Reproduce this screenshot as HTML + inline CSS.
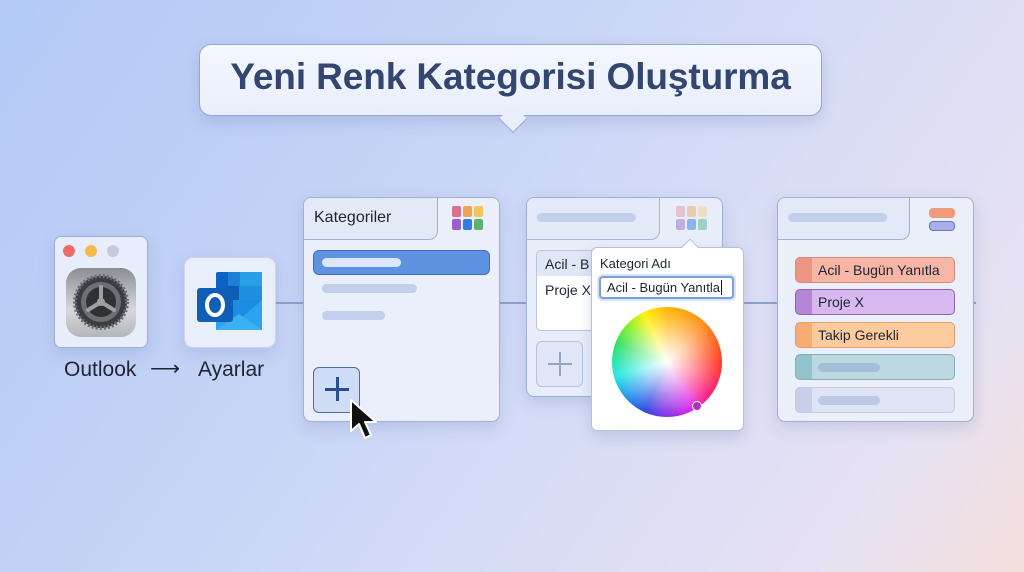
<!DOCTYPE html>
<html><head><meta charset="utf-8"><style>
*{box-sizing:border-box;margin:0;padding:0}
html,body{width:1024px;height:572px;overflow:hidden}
body{position:relative;font-family:"Liberation Sans",sans-serif;
background:linear-gradient(125deg,#b3c9f6 0%,#c5d3f6 35%,#d6dcf6 60%,#e6e1f2 85%,#f3e0dc 100%);}
.abs{position:absolute}
.panel{position:absolute;background:#eaeffb;border:1.5px solid #9fb0d6;border-radius:8px;box-shadow:0 6px 16px rgba(80,100,160,.18)}
.bar{position:absolute;height:9px;border-radius:5px;background:#c2d0ee}
.t{color:#1e2433}
</style></head><body>
<div class="abs" style="left:276px;top:302px;width:700px;height:1.5px;background:#8ea0cc"></div>

<div class="abs" style="left:199px;top:44px;width:623px;height:72px;background:linear-gradient(#f4f7fe,#e8eefc);border:1.5px solid #93a6d2;border-radius:12px;box-shadow:0 6px 16px rgba(80,100,160,.2)"></div>
<div class="abs" style="left:503px;top:109px;width:20px;height:20px;background:#e9eefc;border-right:1.5px solid #93a6d2;border-bottom:1.5px solid #93a6d2;transform:rotate(45deg)"></div>
<div class="abs" style="left:199px;top:56px;width:623px;text-align:center;font-size:37px;font-weight:bold;color:#34466f;letter-spacing:-0.1px">Yeni Renk Kategorisi Oluşturma</div>

<div class="panel" style="left:54px;top:236px;width:94px;height:112px;border-radius:7px;background:#e7edfb"></div>
<div class="abs" style="left:63px;top:245px;width:12px;height:12px;border-radius:50%;background:#ee6a66"></div>
<div class="abs" style="left:85px;top:245px;width:12px;height:12px;border-radius:50%;background:#f5b94c"></div>
<div class="abs" style="left:107px;top:245px;width:12px;height:12px;border-radius:50%;background:#c4ccdc"></div>
<div class="abs" style="left:66px;top:268px;width:70px;height:69px;border-radius:15px;background:linear-gradient(#8a8d92,#d7d8db 60%,#b4b6ba)"></div>
<svg class="abs" style="left:71px;top:272px" width="60" height="60" viewBox="0 0 60 60">
<circle cx="30" cy="30" r="26" fill="#3b3d42"/>
<circle cx="30" cy="30" r="26" fill="none" stroke="#6a6c70" stroke-width="4" stroke-dasharray="2 2"/>
<circle cx="30" cy="30" r="20" fill="#6d6f74"/>
<circle cx="30" cy="30" r="15" fill="#2f3135"/>
<g stroke="#9ea0a4" stroke-width="4" stroke-linecap="round"><line x1="30" y1="30" x2="30" y2="15"/><line x1="30" y1="30" x2="43" y2="38"/><line x1="30" y1="30" x2="17" y2="38"/></g>
<circle cx="30" cy="30" r="4" fill="#9ea0a4"/>
</svg>

<div class="panel" style="left:184px;top:257px;width:92px;height:91px;border-radius:9px;background:#e9eefb;border-color:#c9d4ef"></div>
<svg class="abs" style="left:195px;top:270px" width="70" height="64" viewBox="0 0 70 64">
<rect x="21" y="2" width="46" height="30" rx="2" fill="#0f62c4"/>
<rect x="44" y="2" width="23" height="14" fill="#27a0e8"/>
<rect x="33" y="2" width="12" height="14" fill="#1c80d6"/>
<rect x="33" y="16" width="12" height="14" fill="#0f5cb3"/>
<rect x="44" y="16" width="23" height="14" fill="#1f90e0"/>
<path d="M21 30 L67 30 L67 60 L21 60Z" fill="#1b8de0"/>
<path d="M21 38 L44 50 L67 30 L67 60 L21 60Z" fill="#2aa4ee"/>
<path d="M21 60 L44 44 L67 60Z" fill="#3cb1f2"/>
<rect x="2" y="18" width="36" height="34" rx="3" fill="#0f5fb6"/>
<ellipse cx="20" cy="35" rx="8" ry="10" fill="none" stroke="#fff" stroke-width="4"/>
</svg>

<div class="abs t" style="left:64px;top:358px;font-size:21px">Outlook</div>
<div class="abs t" style="left:150px;top:356px;font-size:21px">⟶</div>
<div class="abs t" style="left:198px;top:358px;font-size:21px">Ayarlar</div>

<div class="panel" style="left:303px;top:197px;width:197px;height:225px"></div>
<div class="abs" style="left:304px;top:198px;width:134px;height:42px;background:#e3e9f7;border-bottom:1.5px solid #9fb0d6;border-right:1.5px solid #9fb0d6;border-radius:7px 0 9px 0"></div>
<div class="abs t" style="left:314px;top:209px;font-size:16px">Kategoriler</div>
<svg class="abs" style="left:452px;top:206px" width="32" height="26"><g>
<rect x="0" y="0" width="9" height="11" rx="2" fill="#d9708d"/><rect x="11" y="0" width="9" height="11" rx="2" fill="#f0a250"/><rect x="22" y="0" width="9" height="11" rx="2" fill="#f4c35a"/>
<rect x="0" y="13" width="9" height="11" rx="2" fill="#9a5fcc"/><rect x="11" y="13" width="9" height="11" rx="2" fill="#2f7ddc"/><rect x="22" y="13" width="9" height="11" rx="2" fill="#5ab46e"/></g></svg>
<div class="abs" style="left:313px;top:250px;width:177px;height:25px;border-radius:6px;background:#5f93e2;border:1.5px solid #3c6fc0"></div>
<div class="bar" style="left:322px;top:258px;width:79px;background:#dbe6fb"></div>
<div class="bar" style="left:322px;top:284px;width:95px"></div>
<div class="bar" style="left:322px;top:311px;width:63px"></div>
<div class="abs" style="left:313px;top:367px;width:47px;height:46px;border-radius:6px;background:#cfdcf6;border:1.5px solid #4e6da6"></div>
<div class="abs" style="left:325px;top:388px;width:24px;height:3px;background:#284e8e"></div>
<div class="abs" style="left:336px;top:377px;width:3px;height:24px;background:#284e8e"></div>
<svg class="abs" style="left:348px;top:398px" width="34" height="44" viewBox="0 0 34 44"><path d="M3 2 L3 33 L11 26 L17 40 L23 37 L17 24 L28 24Z" fill="#111" stroke="#fff" stroke-width="2" stroke-linejoin="round"/></svg>

<div class="panel" style="left:526px;top:197px;width:197px;height:200px;background:#e8edf9"></div>
<div class="abs" style="left:527px;top:198px;width:133px;height:42px;background:#e3e9f7;border-bottom:1.5px solid #a8b7da;border-right:1.5px solid #a8b7da;border-radius:7px 0 9px 0"></div>
<div class="bar" style="left:537px;top:213px;width:99px"></div>
<svg class="abs" style="left:676px;top:206px" width="32" height="26" opacity=".5"><g>
<rect x="0" y="0" width="9" height="11" rx="2" fill="#e09aa8"/><rect x="11" y="0" width="9" height="11" rx="2" fill="#f0a870"/><rect x="22" y="0" width="9" height="11" rx="2" fill="#f4d090"/>
<rect x="0" y="13" width="9" height="11" rx="2" fill="#9a6fd0"/><rect x="11" y="13" width="9" height="11" rx="2" fill="#2f7ddc"/><rect x="22" y="13" width="9" height="11" rx="2" fill="#5ab48e"/></g></svg>
<div class="abs" style="left:536px;top:250px;width:70px;height:81px;background:#fff;border:1.5px solid #b8c4e0;border-radius:5px;overflow:hidden">
<div style="height:25px;background:#dfe6f5"></div></div>
<div class="abs t" style="left:545px;top:256px;font-size:14px">Acil - B</div>
<div class="abs t" style="left:545px;top:282px;font-size:14px">Proje X</div>
<div class="abs" style="left:536px;top:341px;width:47px;height:46px;border-radius:6px;background:#e1e7f6;border:1.5px solid #b6c2de"></div>
<div class="abs" style="left:548px;top:363px;width:24px;height:2px;background:#98a6c4"></div>
<div class="abs" style="left:559px;top:352px;width:2px;height:24px;background:#98a6c4"></div>

<div class="abs" style="left:591px;top:247px;width:153px;height:184px;background:#fff;border:1.5px solid #b3c0de;border-radius:6px;box-shadow:0 6px 14px rgba(80,100,160,.2)"></div>
<div class="abs" style="left:684px;top:241px;width:12px;height:12px;background:#fff;border-left:1.5px solid #b3c0de;border-top:1.5px solid #b3c0de;transform:rotate(45deg)"></div>
<div class="abs t" style="left:600px;top:256px;font-size:13px">Kategori Adı</div>
<div class="abs" style="left:599px;top:276px;width:135px;height:23px;border:2px solid #7aa0dc;border-radius:4px;background:#fff;box-shadow:0 0 0 2px #d5e2f8"></div>
<div class="abs t" style="left:607px;top:280px;font-size:13px">Acil - Bugün Yanıtla<span style="border-left:1px solid #111;margin-left:1px"></span></div>
<div class="abs" style="left:612px;top:307px;width:110px;height:110px;border-radius:50%;background:conic-gradient(from 0deg,#ffb400,#ff8a1a 45deg,#ff3a24 90deg,#ff1a80 130deg,#e028e8 150deg,#7a30e8 185deg,#2848e0 205deg,#20a8f0 235deg,#20e8e0 255deg,#30e060 290deg,#90f020 315deg,#fff000 335deg,#ffb400)"></div>
<div class="abs" style="left:612px;top:307px;width:110px;height:110px;border-radius:50%;background:radial-gradient(circle,#fff 0%,rgba(255,255,255,.6) 30%,rgba(255,255,255,0) 70%)"></div>
<div class="abs" style="left:692px;top:401px;width:10px;height:10px;border-radius:50%;background:#b030c0;border:1.5px solid #fff"></div>

<div class="panel" style="left:777px;top:197px;width:197px;height:225px;background:#ebeffa"></div>
<div class="abs" style="left:778px;top:198px;width:132px;height:42px;background:#e3e9f7;border-bottom:1.5px solid #9fb0d6;border-right:1.5px solid #9fb0d6;border-radius:7px 0 9px 0"></div>
<div class="bar" style="left:788px;top:213px;width:99px"></div>
<div class="abs" style="left:929px;top:208px;width:26px;height:10px;border-radius:4px;background:#ef9a7c"></div>
<div class="abs" style="left:929px;top:221px;width:26px;height:10px;border-radius:4px;background:#a8aee8;border:1px solid #6f78b8"></div>

<div class="abs" style="left:795px;top:257px;width:160px;height:26px;border-radius:5px;background:linear-gradient(90deg,#ec9582 16px,#f6b6a6 16px);border:1.5px solid #d98a78"></div>
<div class="abs t" style="left:818px;top:262px;font-size:14px">Acil - Bugün Yanıtla</div>
<div class="abs" style="left:795px;top:289px;width:160px;height:26px;border-radius:5px;background:linear-gradient(90deg,#b386d6 16px,#d7b8ef 16px);border:1.5px solid #8f64b6"></div>
<div class="abs t" style="left:818px;top:294px;font-size:14px">Proje X</div>
<div class="abs" style="left:795px;top:322px;width:160px;height:26px;border-radius:5px;background:linear-gradient(90deg,#f5ad74 16px,#fbcb9e 16px);border:1.5px solid #e4a06a"></div>
<div class="abs t" style="left:818px;top:327px;font-size:14px">Takip Gerekli</div>
<div class="abs" style="left:795px;top:354px;width:160px;height:26px;border-radius:5px;background:linear-gradient(90deg,#92c3cd 16px,#bcd9e2 16px);border:1.5px solid #7fb0bc"></div>
<div class="bar" style="left:818px;top:363px;width:62px;background:#9fc0d8"></div>
<div class="abs" style="left:795px;top:387px;width:160px;height:26px;border-radius:5px;background:linear-gradient(90deg,#c9cee9 16px,#dfe3f3 16px);border:1.5px solid #c3cae2"></div>
<div class="bar" style="left:818px;top:396px;width:62px;background:#bcc8e6"></div>
</body></html>
